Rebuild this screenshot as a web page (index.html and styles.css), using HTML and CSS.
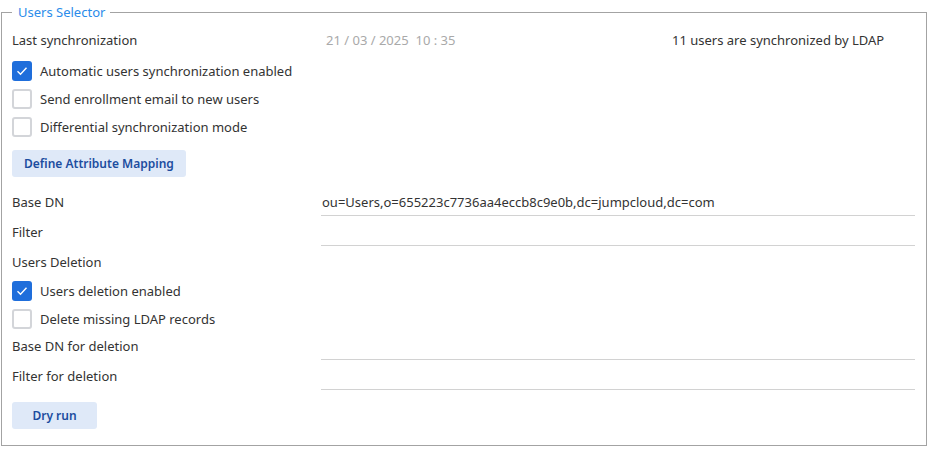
FILE: index.html
```html
<!DOCTYPE html>
<html lang="en">
<head>
  <meta charset="UTF-8" />
  <meta name="viewport" content="width=device-width, initial-scale=1.0"/>
  <title>Users Selector</title>
  <link rel="stylesheet" href="styles.css">
</head>
<body>
  <fieldset class="panel">
    <legend>Users Selector</legend>

    <div class="row sync-row">
      <span class="label">Last synchronization</span>
      <span class="date">21 / 03 / 2025&nbsp;&nbsp;10 : 35</span>
      <span class="count">11 users are synchronized by LDAP</span>
    </div>

    <label class="check first">
      <span class="box checked"><svg viewBox="0 0 20 20"><path d="M5.5 10.2l3 3 6-6.4"/></svg></span>
      Automatic users synchronization enabled
    </label>
    <label class="check">
      <span class="box"></span>
      Send enrollment email to new users
    </label>
    <label class="check">
      <span class="box"></span>
      Differential synchronization mode
    </label>

    <button class="btn mapping">Define Attribute Mapping</button>

    <div class="row field base-dn">
      <span class="label">Base DN</span>
      <span class="input">ou=Users,o=655223c7736aa4eccb8c9e0b,dc=jumpcloud,dc=com</span>
    </div>
    <div class="row field">
      <span class="label">Filter</span>
      <span class="input"></span>
    </div>
    <div class="row title">
      <span class="label">Users Deletion</span>
    </div>

    <label class="check first-del">
      <span class="box checked"><svg viewBox="0 0 20 20"><path d="M5.5 10.2l3 3 6-6.4"/></svg></span>
      Users deletion enabled
    </label>
    <label class="check">
      <span class="box"></span>
      Delete missing LDAP records
    </label>

    <div class="row field del-base">
      <span class="label">Base DN for deletion</span>
      <span class="input"></span>
    </div>
    <div class="row field">
      <span class="label">Filter for deletion</span>
      <span class="input"></span>
    </div>

    <button class="btn dry">Dry run</button>
  </fieldset>
</body>
</html>
```

FILE: styles.css
```css
body {
  margin: 0;
  background: #fff;
  font-family: "Noto Sans", "Open Sans", sans-serif;
  font-size: 13px;
  color: #333;
}
.panel {
  margin: 3px 2px 0 1px;
  padding: 0 11px 16px 10px;
  border: 1px solid #a3a3a3;
  display: flex;
  flex-direction: column;
  align-items: flex-start;
  min-width: 0;
}
.panel legend {
  margin-left: 0;
  padding: 0 5px 0 6px;
  line-height: 18px;
  color: #2b8cea;
  font-size: 13px;
}
.row {
  display: flex;
  align-items: center;
  width: 100%;
}
.label {
  width: 309px;
  flex-shrink: 0;
}
.sync-row {
  height: 30px;
  margin-top: 4px;
}
.date {
  width: 346px;
  padding-left: 5px;
  color: #a9a9a9;
}
.check {
  display: flex;
  align-items: center;
  gap: 8px;
  height: 28px;
  cursor: pointer;
}
.check.first {
  margin-top: 2px;
}
.check.first-del {
  margin-top: 1px;
}
.box {
  width: 20px;
  height: 20px;
  box-sizing: border-box;
  border: 2px solid #d3d5d9;
  border-radius: 3px;
  background: #fff;
  display: flex;
}
.box.checked {
  border: none;
  background: #1f6edb;
}
.box svg {
  width: 20px;
  height: 20px;
}
.box path {
  fill: none;
  stroke: #fff;
  stroke-width: 1.4;
}
.btn {
  height: 27px;
  padding: 0 12px;
  border: none;
  border-radius: 3px;
  background: #dfe9f8;
  color: #1c4d9f;
  font-family: inherit;
  font-size: 12px;
  font-weight: 600;
}
.mapping {
  margin-top: 9px;
}
.dry {
  margin-top: 12px;
  min-width: 85px;
}
.field {
  height: 28px;
  margin-top: 2px;
}
.base-dn {
  margin-top: 11px;
}
.del-base {
  margin-top: -1px;
}
.input {
  flex: 1;
  align-self: stretch;
  display: flex;
  align-items: center;
  padding-left: 1px;
  border-bottom: 1px solid #d2d2d2;
}
.title {
  height: 28px;
  margin-top: 2px;
}
```
